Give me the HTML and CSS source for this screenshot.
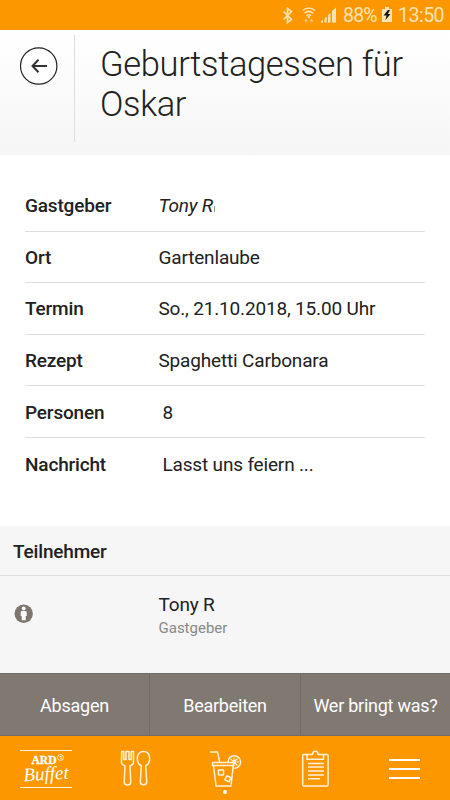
FILE: index.html
```html
<!DOCTYPE html>
<html lang="de">
<head>
<meta charset="utf-8">
<title>Geburtstagessen für Oskar</title>
<link rel="stylesheet" href="styles.css">
</head>
<body>
<div class="status">
  <svg class="status-icons" width="70" height="30" viewBox="0 0 70 30">
    <path d="M3.500 11.500l8 8-4 3v-14l4 3-8 8" fill="none" stroke="#ffe3b5" stroke-width="1.700"/>
    <g fill="none" stroke="#ffe3b5" stroke-width="1.500"><path d="M22.500 10.500q6.300-5 12.600 0M24.500 13.200q4.300-3.700 8.600 0M26.500 15.700q2.300-2 4.600 0"/></g>
    <circle cx="28.800" cy="17" r="1.200" fill="#ffe3b5"/>
    <path d="M24 19.500h4l-2 3zM29.500 21.500h4l-2-3z" fill="#f8cd8d"/>
    <path d="M41 22.500v-1.500l2-1.500v3zM44.500 22.500v-4l2.200-2v6zM48 22.500v-7.500l2.500-2v9.500zM52 22.500v-11.500l4-3.500v15z" fill="#ffe3b5"/>
  </svg>
  <span class="percent">88%</span>
  <svg class="battery" width="12" height="16" viewBox="0 0 12 16"><path d="M1 2h3V0h4v2h3v13H1z" fill="#ffe3b5"/><path d="M7 3L2.500 8.500h3L4.500 13 9.500 7H6.800L9 3z" fill="#111"/></svg>
  <span class="clock">13:50</span>
</div>
<header class="header">
  <div class="back">
    <svg width="38" height="38" viewBox="0 0 38 38" fill="none"><circle cx="18.700" cy="19" r="18.200" fill="#fff" stroke="#222" stroke-width="1.200"/><path d="M27 19H13M18.500 12.800L12.500 19 18.500 25.200" stroke="#333" stroke-width="2"/></svg>
  </div>
  <h1 class="title">Geburtstagessen für<br>Oskar</h1>
</header>
<main class="details">
  <div class="row"><span class="label">Gastgeber</span><span class="value host">Tony R</span></div>
  <div class="row"><span class="label">Ort</span><span class="value">Gartenlaube</span></div>
  <div class="row"><span class="label">Termin</span><span class="value">So., 21.10.2018, 15.00 Uhr</span></div>
  <div class="row"><span class="label">Rezept</span><span class="value">Spaghetti Carbonara</span></div>
  <div class="row"><span class="label">Personen</span><span class="value indent">8</span></div>
  <div class="row"><span class="label">Nachricht</span><span class="value indent">Lasst uns feiern ...</span></div>
</main>
<section class="guests">
  <h2 class="guests-title">Teilnehmer</h2>
  <div class="guest">
    <svg class="person" width="20" height="20" viewBox="0 0 20 20"><circle cx="9.700" cy="9.700" r="9.200" fill="#7d766e"/><circle cx="9.700" cy="4.500" r="1.900" fill="#fff"/><path d="M8 7.100h3.400q1.300 0 1.300 1.300v3.700h-1v4.200h-4v-4.200h-1V8.400q0-1.300 1.300-1.300z" fill="#fff"/></svg>
    <div><div class="guest-name">Tony R</div><div class="guest-role">Gastgeber</div></div>
  </div>
</section>
<div class="actions"><div class="action">Absagen</div><div class="action">Bearbeiten</div><div class="action">Wer bringt was?</div></div>
<nav class="nav">
  <div class="tab"><div class="logo"><div class="logo-top">ARD<svg width="7" height="7" viewBox="0 0 7 7" fill="none" stroke="#fff" stroke-width=".8"><circle cx="3.500" cy="3.500" r="2.900"/><path d="M2.500 3l1.500-.8v3"/></svg></div><div class="logo-script">Buffet</div></div></div>
  <div class="tab"><svg width="90" height="64" viewBox="0 0 90 64" fill="none" stroke="#fff3dc" stroke-width="1.500" stroke-linejoin="round"><path d="M31.700 15.500h2.100v8h2.200v-8h3v8h2.200v-8h2.300v10.500q0 3-3.500 3.700l.8 16.300q0 3-3.300 3t-3.300-3l.8-16.300q-3.500-.7-3.500-3.700zM53.500 15.500c7.500 0 8 11.500 2.200 14.300l1 16.200q0 2.800-3.200 2.800t-3.200-2.800l1-16.200c-5.800-2.800-5.300-14.300 2.200-14.300z"/></svg></div>
  <div class="tab"><svg width="90" height="64" viewBox="0 0 90 64" fill="none" stroke="#fff3dc" stroke-width="1.500" stroke-linejoin="round"><path d="M30 16h7.500l2.200 10M32.500 26.500h21v3h-21zM33.500 29.500l2.500 20.500h15l2.300-20.500M38.500 34h5v5h-5zM46.800 39.800l4.200 2-2 4-4.200-2zM48 26.300a6.300 6.300 0 1 1 6.200 6"/><path d="M54 26V21.500M54 26l3.500-3.500M54 26h5M54 26l3.500 3.500M54 26l-3.500-3M54 26v4" stroke-width="1.200"/><circle cx="45" cy="56" r="2" fill="#fff" stroke="none"/></svg></div>
  <div class="tab"><svg width="90" height="64" viewBox="0 0 90 64" fill="none" stroke="#fff3dc" stroke-width="1.500" stroke-linejoin="round"><path d="M37 18.500h-3.500q-.8 0-.8.800v29.500q0 1.200 1.200 1.200h23q1.200 0 1.200-1.200V19.300q0-.8-.8-.8H53.500M37 18.500h5.500q0-3.200 2.800-3.200t2.800 3.200h5.400v4.800H37z"/><path d="M38 27.500h16M38 31h16M38 35h16M38 39h16M38 42.700h12"/></svg></div>
  <div class="tab"><div class="burger"><i></i><i></i><i></i></div></div>
</nav>
</body>
</html>
```

FILE: styles.css
```css
* { box-sizing: border-box; }
body { margin: 0; width: 450px; height: 800px; overflow: hidden; background: #fff; color: #212121; font-family: Roboto, sans-serif; display: flex; flex-direction: column; }
.status { height: 30px; flex: none; background: #fc9700; color: #ffe3b5; display: flex; align-items: center; justify-content: flex-end; padding-right: 6px; font-size: 19.500px; }
.status-icons { width: 70px; margin-right: -7px; }
.percent { width: 36px; letter-spacing: -.8px; line-height: 30px; padding-top: 2px; }
.battery { margin: 0 5px 0 2px; }
.clock { width: 46px; padding-top: 2px; line-height: 30px; letter-spacing: -.5px; }
.header { height: 125px; flex: none; display: flex; background: linear-gradient(#fff, #f6f6f6); }
.back { width: 75px; height: 107px; margin-top: 5px; border-right: 1px solid #dedede; padding: 12px 0 0 20px; }
.title { margin: 15px 0 0 25px; font-size: 34.500px; line-height: 39.500px; font-weight: 300; letter-spacing: -.35px; white-space: nowrap; }
.details { height: 371px; flex: none; padding: 25px 25px 0; }
.row { height: 51.600px; display: flex; align-items: center; border-bottom: 1px solid #dedede; padding-top: 1px; font-size: 19px; letter-spacing: -.17px; white-space: nowrap; }
.row:last-child { border-bottom: 0; }
.label { width: 133.500px; font-weight: 500; }
.host { font-style: italic; display: flex; align-items: center; }
.host::after { content: ""; width: 1px; height: 6px; margin: 6px 0 0 1px; background: #999; }
.indent { padding-left: 4px; }
.guests { height: 147px; flex: none; background: #f6f6f6; }
.guests-title { height: 50px; margin: 0; padding: 1px 13px 0; line-height: 49px; font-size: 19px; font-weight: 500; letter-spacing: -.17px; border-bottom: 1px solid #dedede; }
.guest { display: flex; padding-top: 16px; }
.person { margin: 12px 124.500px 0 14px; }
.guest-name { font-size: 19px; line-height: 25px; letter-spacing: -.17px; }
.guest-role { font-size: 15px; line-height: 22px; color: #888; }
.actions { height: 63px; flex: none; display: grid; grid-template-columns: 150px 151px 149px; background: #7f7972; border-top: 1px solid #706b65; border-bottom: 1px solid #706b65; }
.action { color: #fff; font-size: 18px; letter-spacing: -.25px; display: flex; align-items: center; justify-content: center; border-right: 1px solid #706c66; white-space: nowrap; padding-top: 1px; }
.action:last-child { border-right: 0; }
.nav { height: 64px; flex: none; background: #fc9700; display: grid; grid-template-columns: repeat(5, 90px); }
.tab svg { display: block; }
.logo { width: 52px; height: 38px; margin: 14px 0 0 20px; border-top: 1px solid #fff3dc; border-bottom: 1px solid #fff3dc; color: #fff; text-align: center; }
.logo-top { font: bold 11.500px/16px "Liberation Serif", serif; display: flex; justify-content: center; margin-top: 1px; gap: 1px; padding-left: 4px; -webkit-text-stroke: .3px #fff; }
.logo-top svg { margin-top: 2px; }
.logo-script { font: italic 19px/18px "Liberation Serif", serif; transform: rotate(-3deg); margin-top: -3px; }
.burger { width: 31px; margin: 23px 0 0 29px; display: grid; gap: 7px; }
.burger i { height: 2px; background: #fff; }
```
